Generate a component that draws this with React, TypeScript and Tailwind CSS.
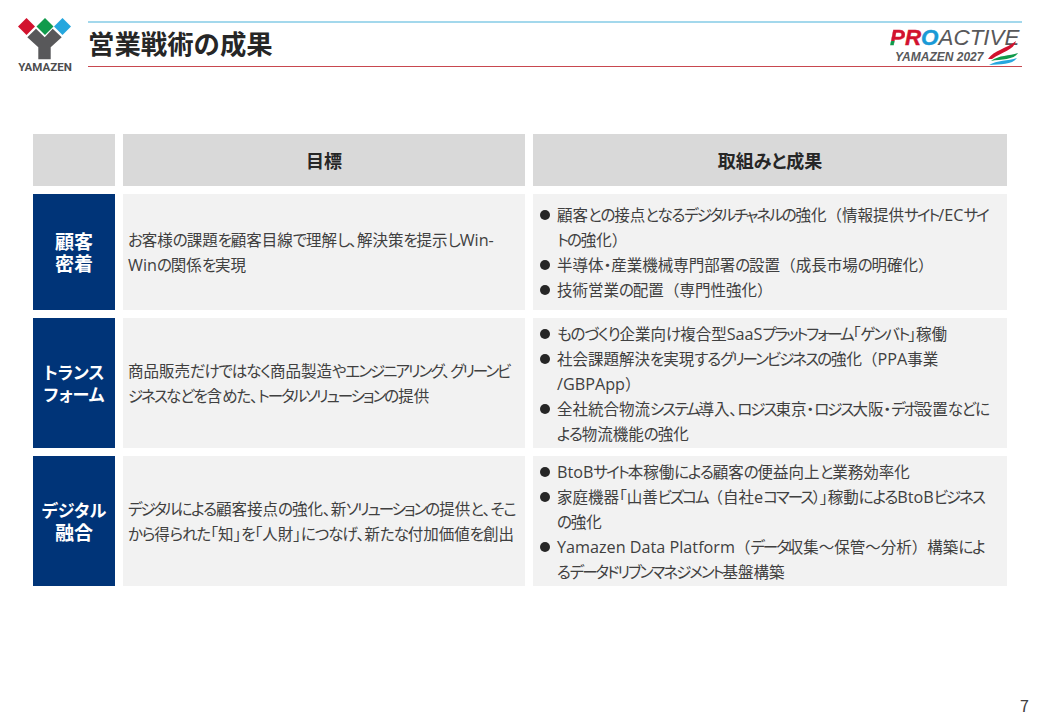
import React from "react";

function Logo() {
  return (
    <div className="w-[56px] shrink-0 flex flex-col items-center pt-[18px]">
      <svg width="56" height="42" viewBox="0 0 56 42" className="block">
        <polygon points="9.5,0 18,8.5 9.5,17 1,8.5" fill="#d2122e" />
        <polygon points="28,0 36.5,8.5 28,17 19.5,8.5" fill="#109a4b" />
        <polygon points="45.5,0 54,8.5 45.5,17 37,8.5" fill="#25a7de" />
        <polygon points="10.3,19.3 19,10.7 27.7,19.3 35.7,10.7 44.7,19.3 33.7,29.3 33.7,41.3 21.3,41.3 21.3,29.3" fill="#58585a" />
      </svg>
      <span className="text-[11.5px] leading-[13px] font-bold text-[#4d4d4f] font-['Roboto',sans-serif] mt-[1px]">YAMAZEN</span>
    </div>
  );
}

function Brand() {
  return (
    <div className="relative w-[132px] h-[40px] mt-[3px]">
      <div className="absolute left-0 top-[0px] text-[22.4px] leading-[24px] italic font-['Liberation_Sans',sans-serif] whitespace-nowrap [-webkit-text-stroke:0.4px]">
        <span className="font-bold text-transparent bg-clip-text bg-[linear-gradient(#d2122e_64%,#109a4b_64%)]">P</span>
        <span className="font-bold text-[#d2122e]">R</span>
        <span className="font-bold text-[#1a9ad6]">O</span>
        <span className="text-[#58585a] [-webkit-text-stroke:0px]">ACTIVE</span>
      </div>
      <div className="absolute left-[5px] top-[24px] text-[12px] leading-[14px] italic font-bold text-[#58585a] font-['Liberation_Sans',sans-serif] whitespace-nowrap">YAMAZEN 2027</div>
      <svg width="30" height="24" viewBox="0 0 30 24" className="absolute right-[4px] top-[15px]">
        <path d="M0 18 C6 9 18 8 28 0 C26 9 14 11 4 18Z" fill="#d2122e" />
        <path d="M3 20 C11 14 21 15 30 12 C26 19 13 18 3 20Z" fill="#109a4b" />
        <path d="M1 24 C9 19 20 20 29 17 C24 24 12 23 1 24Z" fill="#25a7de" />
      </svg>
    </div>
  );
}

function Header() {
  return (
    <header className="flex pl-[17px] pr-[18px] h-[80px]">
      <Logo />
      <div className="flex-1 ml-[15px] mt-[21px] h-[46px] border-t-2 border-b border-t-[#a3d8ec] border-b-[#c8474f] flex items-center justify-between">
        <h1 className="text-[26.4px] leading-none font-bold text-[#262626] pb-[2px] [font-feature-settings:normal]">営業戦術の成果</h1>
        <Brand />
      </div>
    </header>
  );
}

function Rich({ text }: { text: string }) {
  const parts = text.split(/([（）]|[A-Za-z0-9/\- ]+|[ァ-ヶー]+|[ぁ-ん]+)/).filter(Boolean);
  return (
    <>
      {parts.map((p, i) =>
        /^[（）]$/.test(p) ? (
          <span key={i} className="[font-feature-settings:normal]">{p}</span>
        ) : /^[A-Za-z0-9/\- ]+$/.test(p) ? (
          <span key={i} className="font-['Open_Sans',sans-serif] text-[16.2px] whitespace-pre">{p}</span>
        ) : /^[ァ-ヶー]+$/.test(p) ? (
          <span key={i} className="tracking-[-2px]">{p}</span>
        ) : /^[ぁ-ん]+$/.test(p) ? (
          <span key={i} className="tracking-[-1.1px]">{p}</span>
        ) : (
          <span key={i}>{p}</span>
        ),
      )}
    </>
  );
}

function Line({ text }: { text: string }) {
  return <div className="whitespace-nowrap h-[25px]"><Rich text={text} /></div>;
}

function Cell({ children, className = "" }: { children: React.ReactNode; className?: string }) {
  return <div className={`bg-[#f2f2f2] flex flex-col justify-center ${className}`}>{children}</div>;
}

function Side({ lines }: { lines: string[][] }) {
  return (
    <div className="bg-[#003478] text-white flex flex-col items-center justify-center leading-[22px] font-bold">
      {lines.map(([t, c]) => <div key={t} className={c}>{t}</div>)}
    </div>
  );
}

function Goal({ lines }: { lines: string[] }) {
  return (
    <Cell className="pl-[5px] text-[15.5px] leading-[25px] text-[#404040]">
      {lines.map((l) => <Line key={l} text={l} />)}
    </Cell>
  );
}

function Results({ items }: { items: string[][] }) {
  return (
    <Cell className="pl-[7px] text-[15.5px] leading-[25px] text-[#404040]">
      {items.map((lines) => (
        <div key={lines[0]} className="flex">
          <span className="w-[17px] shrink-0 flex items-center h-[25px] pt-[1px]"><span className="block w-[10px] h-[10px] rounded-full bg-[#262626]" /></span>
          <div>{lines.map((l) => <Line key={l} text={l} />)}</div>
        </div>
      ))}
    </Cell>
  );
}

export default function App() {
  return (
    <div className="w-[1040px] h-[720px] bg-white relative overflow-hidden font-['Noto_Sans_CJK_JP','Noto_Sans',sans-serif] [font-feature-settings:'palt']">
      <Header />
      <main className="mt-[54px] ml-[33px] w-[974px] grid grid-cols-[82px_402px_474px] grid-rows-[52px_116px_130px_130px] gap-[8px]">
        <div className="bg-[#d9d9d9]" />
        <div className="bg-[#d9d9d9] flex items-center justify-center text-[18px] font-bold text-[#262626]">目標</div>
        <div className="bg-[#d9d9d9] flex items-center justify-center text-[18px] font-bold text-[#262626]">取組みと成果</div>

        <Side lines={[["顧客", "text-[19px]"], ["密着", "text-[19px]"]]} />
        <Goal lines={["お客様の課題を顧客目線で理解し、解決策を提示しWin-", "Winの関係を実現"]} />
        <Results items={[
          ["顧客との接点となるデジタルチャネルの強化（情報提供サイト/ECサイ", "トの強化）"],
          ["半導体・産業機械専門部署の設置（成長市場の明確化）"],
          ["技術営業の配置（専門性強化）"],
        ]} />

        <Side lines={[["トランス", "text-[17px]"], ["フォーム", "text-[17px]"]]} />
        <Goal lines={["商品販売だけではなく商品製造やエンジニアリング、グリーンビ", "ジネスなどを含めた、トータルソリューションの提供"]} />
        <Results items={[
          ["ものづくり企業向け複合型SaaSプラットフォーム「ゲンバト」稼働"],
          ["社会課題解決を実現するグリーンビジネスの強化（PPA事業", "/GBPApp）"],
          ["全社統合物流システム導入、ロジス東京・ロジス大阪・デポ設置などに", "よる物流機能の強化"],
        ]} />

        <Side lines={[["デジタル", "text-[17px]"], ["融合", "text-[19px]"]]} />
        <Goal lines={["デジタルによる顧客接点の強化、新ソリューションの提供と、そこ", "から得られた「知」を「人財」につなげ、新たな付加価値を創出"]} />
        <Results items={[
          ["BtoBサイト本稼働による顧客の便益向上と業務効率化"],
          ["家庭機器「山善ビズコム（自社eコマース）」稼動によるBtoBビジネス", "の強化"],
          ["Yamazen Data Platform（データ収集～保管～分析）構築によ", "るデータドリブンマネジメント基盤構築"],
        ]} />
      </main>
      <div className="absolute right-[11px] bottom-[5px] text-[16px] leading-[20px] text-[#404040]">7</div>
    </div>
  );
}
